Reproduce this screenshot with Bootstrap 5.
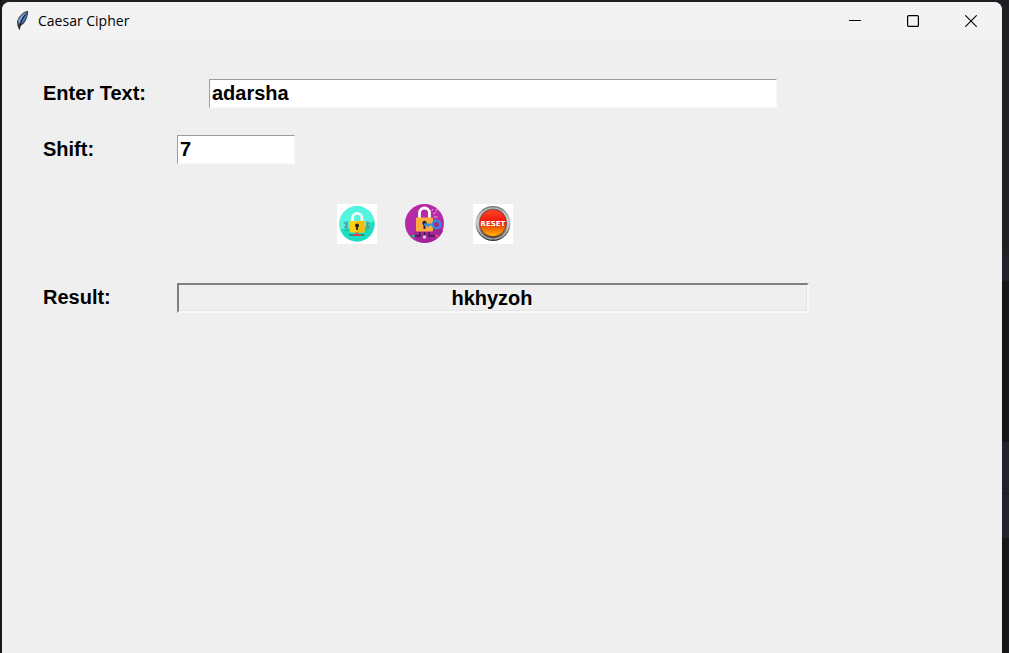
<!DOCTYPE html>
<html lang="en">
<head>
<meta charset="utf-8">
<meta name="viewport" content="width=device-width, initial-scale=1">
<title>Caesar Cipher</title>
<link href="https://cdn.jsdelivr.net/npm/bootstrap@5.3.0/dist/css/bootstrap.min.css" rel="stylesheet">
<style>
body {
  background:
    linear-gradient(#17181c, #17181c) left top / 2px 100% no-repeat,
    linear-gradient(#1f1f24 0 255px, #21232b 255px 281px, #17181c 281px 442px, #222429 442px 493px, #191a1e 493px 494px, #222429 494px 538px, #17181c 538px);
  font-family: "Liberation Sans", Arial, sans-serif;
  color: #000;
}
.app-window { margin: 2px 7px 0 2px; min-height: calc(100vh - 2px); background: #efefef; border-radius: 8px 8px 0 0; overflow: hidden; }
.title-bar { background: #f3f3f3; height: 39px; padding: 0 2px 2px 12px; }
.title-text { font: 14px/20px "Open Sans", "Noto Sans", sans-serif; }
.win-btn { width: 58px; height: 37px; padding: 0; border: 0; border-radius: 0; }
.cipher-form { padding: 38px 193px 40px 41px; font-size: 20px; line-height: 24px; font-weight: 700; }
.field-label { width: 134px; flex: none; padding-bottom: 2px; }
.field-label.wide { width: 166px; }
.entry.form-control {
  height: 29px; padding: 0 2px; font: inherit; color: #000; background: #fff;
  border: 1px solid; border-color: #9c9c9c #fafafa #fafafa #9c9c9c; border-radius: 0;
}
.entry-text { margin-right: 32px; }
.entry.entry-shift { width: 118px; }
.row-shift { margin-top: 27px; }
.row-actions { margin: 40px 0 39px; gap: 28px; padding-right: 2px; }
.row-actions .btn { width: 40px; height: 40px; padding: 0; border: 0; border-radius: 0; }
.row-actions svg { display: block; }
.result-box { height: 30px; padding-right: 2px; border: 2px solid; border-color: #808080 #f7f7f7 #f9f9f9 #808080; box-shadow: inset -1px -1px #e4e4e4; }
</style>
</head>
<body>
<div class="app-window">
  <header class="title-bar d-flex align-items-center">
    <svg width="16" height="22" viewBox="0 0 16 22" aria-hidden="true">
      <path d="M14 1C9 1.500 4.500 6 3 11.500L3.500 16l2 4.500.8-4.500C11 14 14.500 7 14 1Z" fill="#34373d"/>
      <path d="M13 2C8 4 5 8 4.200 13.500L6 13c1-4 3-7 6-10Z" fill="#79aeee"/>
      <path d="M13 3C10 6 8 10 6.500 14.500 10.500 12 13 8 13 3Z" fill="#3d79c5"/>
      <path d="M11 5C8 8.500 6.500 13 5.500 19" fill="none" stroke="#111" stroke-width=".8"/>
      <path d="M4 11c1-4 3-7 7-9.500" fill="none" stroke="#a8adb5" stroke-width=".7"/>
    </svg>
    <span class="title-text flex-grow-1 ms-2">Caesar Cipher</span>
    <button class="btn win-btn" type="button" aria-label="Minimize"><svg width="12" height="12" viewBox="0 0 12 12" class="d-block m-auto"><path d="M0 5.500H12" stroke="#000"/></svg></button>
    <button class="btn win-btn" type="button" aria-label="Maximize"><svg width="12" height="12" viewBox="0 0 12 12" class="d-block m-auto"><rect x=".6" y=".6" width="10.800" height="10.800" rx="1" fill="none" stroke="#000" stroke-width="1.200"/></svg></button>
    <button class="btn win-btn" type="button" aria-label="Close"><svg width="12" height="12" viewBox="0 0 12 12" class="d-block m-auto"><path d="M.3.3l11.400 11.400M11.700.3L.3 11.700" stroke="#000" stroke-width="1.100"/></svg></button>
  </header>
  <form class="cipher-form">
    <div class="d-flex align-items-center">
      <label class="field-label wide" for="plain">Enter Text:</label>
      <div class="entry-text flex-grow-1"><input class="form-control entry" id="plain" type="text" value="adarsha"></div>
    </div>
    <div class="row-shift d-flex align-items-center">
      <label class="field-label" for="shift">Shift:</label>
      <input class="form-control entry entry-shift" id="shift" type="text" value="7">
    </div>
    <div class="row-actions d-flex justify-content-center">
      <button class="btn" type="button" aria-label="Encrypt">
        <svg width="40" height="40" viewBox="0 0 40 40">
          <defs><linearGradient id="teal" x1="0" y1="0" x2="0" y2="1"><stop offset="0" stop-color="#4df5df"/><stop offset="1" stop-color="#5ff0de"/></linearGradient></defs>
          <path d="M0 0h40v40H0z" fill="#fff"/>
          <circle cx="20" cy="20" r="17.700" fill="#1bdcc4"/>
          <path d="M2.700 16A17.700 17.700 0 0 1 37.300 16C34 20 28 23 22 24L3 25Z" fill="url(#teal)"/>
          <path d="M7 18l3 3-3 3M10 17v8M33 18l-3 3 3 3M30 17v8M8 26h4M32 26h-4" fill="none" stroke="#28a99d" stroke-width="1.200"/>
          <path d="M8 23h3M29 23h3" stroke="#a98a70" stroke-width="1.500"/>
          <path d="M15.500 18v-4a4.700 4.700 0 0 1 9.400 0v4" fill="none" stroke="#f4fffd" stroke-width="2.800"/>
          <rect x="13" y="17" width="14.500" height="11.500" rx="1" fill="#ffd012"/>
          <path d="M20 17h7.500v11.500H20z" fill="#f4bd08"/>
          <circle cx="20" cy="21.500" r="2" fill="#222"/><path d="M19.100 21h1.800v5h-1.800z" fill="#222"/>
          <path d="M12 31h15.500" stroke="#297c79" stroke-width="1.500"/><path d="M16.500 31h7M20 28.500V31" stroke="#ef3d4b" stroke-width="2"/>
        </svg>
      </button>
      <button class="btn" type="button" aria-label="Decrypt">
        <svg width="40" height="40" viewBox="0 0 40 40">
          <circle cx="19.500" cy="19.500" r="19.500" fill="#b52aa6"/>
          <path d="M27 16l11 11c-4 9-15 15-26 10l-3-8Z" fill="#a3259a"/>
          <path d="M14.500 14V9a5 5 0 0 1 10 0v6" fill="none" stroke="#fff" stroke-width="2.800"/>
          <path d="M26.500 7l1.500-2M28 10l3-2M29 13l3.500 0M31 5l1 2" stroke="#eba8e3" stroke-width="1"/>
          <rect x="11" y="13.500" width="17" height="14" rx="1" fill="#ffab3d"/>
          <circle cx="19.500" cy="19" r="2.200" fill="#272449"/><path d="M18.500 19h2v6h-2z" fill="#272449"/>
          <circle cx="31.500" cy="20.500" r="3.800" fill="#9a328f" stroke="#348bdf" stroke-width="2.300"/>
          <path d="M19 20.500h9M23 20v3" stroke="#348bdf" stroke-width="2"/>
          <path d="M15 28v4H9M19.500 28v4M24 28v4h7" fill="none" stroke="#3b1849" stroke-width="1.300"/>
          <circle cx="8.500" cy="32" r="1.600" fill="#26b98a"/><circle cx="19.500" cy="33" r="1.700" fill="#e7c9ed"/><circle cx="31.500" cy="32" r="1.600" fill="#f34b61"/>
        </svg>
      </button>
      <button class="btn" type="button" aria-label="Reset">
        <svg width="40" height="40" viewBox="0 0 40 40">
          <defs>
            <linearGradient id="rim" x1="0" y1="0" x2="0" y2="1"><stop offset="0" stop-color="#777"/><stop offset=".45" stop-color="#c4c4c4"/><stop offset="1" stop-color="#303030"/></linearGradient>
            <linearGradient id="face" x1="0" y1="0" x2="0" y2="1"><stop offset="0" stop-color="#ff4528"/><stop offset=".45" stop-color="#f01408"/><stop offset=".55" stop-color="#e83a05"/><stop offset="1" stop-color="#ffb800"/></linearGradient>
          </defs>
          <path d="M0 0h40v40H0z" fill="#fff"/>
          <circle cx="20" cy="19.500" r="17.500" fill="url(#rim)"/>
          <circle cx="20" cy="19.500" r="15.500" fill="none" stroke="#ddd" stroke-width="1.200" opacity=".7"/>
          <circle cx="20" cy="19" r="13.800" fill="#9b3024"/>
          <circle cx="20" cy="19" r="13" fill="url(#face)"/>
          <text x="20" y="22" text-anchor="middle" font-family="DejaVu Sans, sans-serif" font-weight="700" font-size="7" fill="#fff">RESET</text>
        </svg>
      </button>
    </div>
    <div class="d-flex align-items-center">
      <label class="field-label" for="result">Result:</label>
      <output class="result-box flex-grow-1 d-flex align-items-center justify-content-center" id="result">hkhyzoh</output>
    </div>
  </form>
</div>
<script src="https://cdn.jsdelivr.net/npm/bootstrap@5.3.0/dist/js/bootstrap.bundle.min.js"></script>
</body>
</html>
